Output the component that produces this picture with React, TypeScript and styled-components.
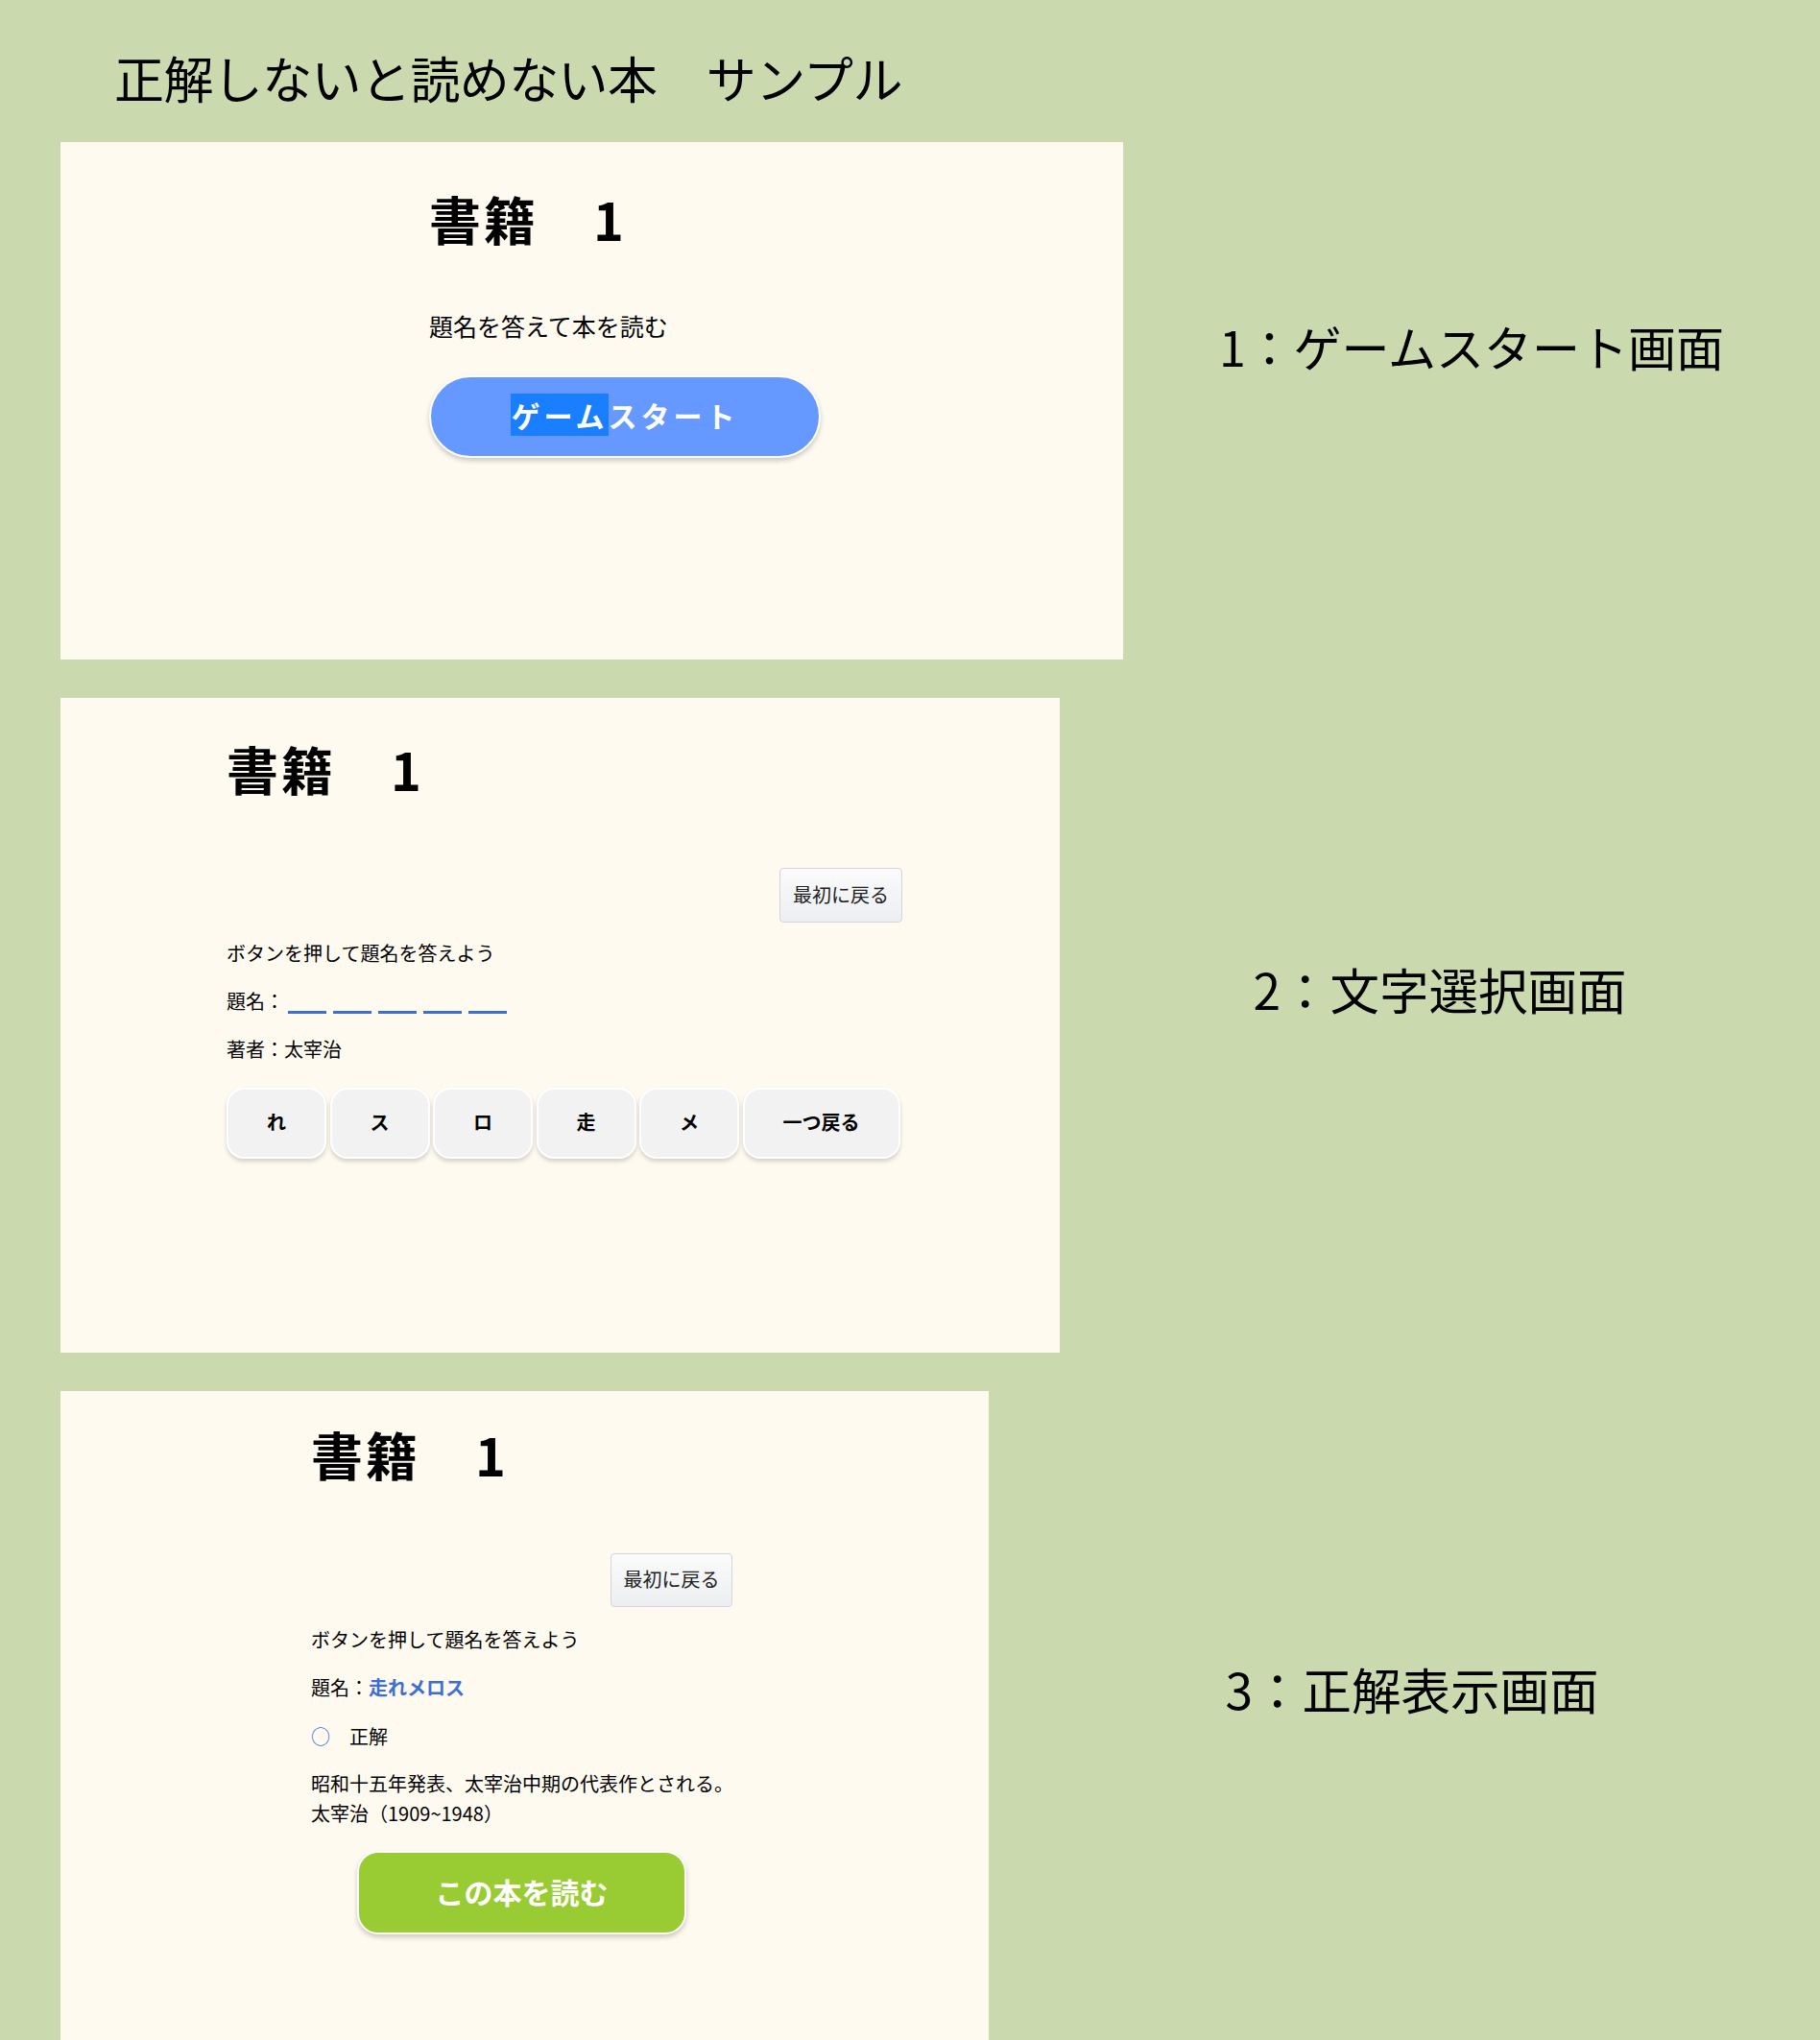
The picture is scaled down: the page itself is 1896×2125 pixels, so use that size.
import React from 'react'
import styled, { createGlobalStyle } from 'styled-components'

const GlobalStyle = createGlobalStyle`
  html, body {
    margin: 0;
    padding: 0;
    background: #cbd9af;
  }
  body {
    font-family: "Noto Sans CJK JP", "Noto Sans", sans-serif;
    color: #000;
  }
`

const Page = styled.div`
  display: flex;
  flex-direction: column;
  gap: 40px;
  padding-left: 63px;
`

const PageTitle = styled.h1`
  margin: 0;
  height: 108px;
  box-sizing: border-box;
  padding: 55px 0 0 56px;
  font-size: 52px;
  line-height: 52px;
  font-weight: 400;
  letter-spacing: -0.6px;
  white-space: nowrap;
`

const Row = styled.div`
  display: flex;
  align-items: flex-start;
`

const Panel = styled.section`
  flex-shrink: 0;
  box-sizing: border-box;
  width: ${({ $w }) => $w}px;
  height: ${({ $h }) => $h}px;
  padding: ${({ $top }) => $top}px 0 0 ${({ $left }) => $left}px;
  background: #fffaf0;
  overflow: hidden;
`

const Column = styled.div`
  display: flex;
  flex-direction: column;
  align-items: flex-start;
  width: ${({ $w }) => $w}px;
`

const ScreenLabel = styled.div`
  flex: 1;
  text-align: center;
  margin-top: ${({ $top }) => $top}px;
  padding-left: ${({ $shift }) => $shift || 0}px;
  font-size: ${({ $size }) => $size || 50}px;
  line-height: 50px;
  font-weight: 400;
  white-space: nowrap;
`

const BookTitle = styled.h2`
  margin: 0;
  font-size: 54px;
  line-height: 54px;
  font-weight: 700;
  letter-spacing: 3px;
  white-space: nowrap;
`

const Lead = styled.p`
  margin: 72px 0 0;
  font-size: 25px;
  line-height: 25px;
`

const StartButton = styled.button`
  margin-top: 39px;
  width: 408px;
  height: 86px;
  padding: 0 0 4px;
  border: 2px solid #fff;
  border-radius: 43px;
  background: #6699ff;
  color: #fff;
  font-family: inherit;
  font-size: 30px;
  font-weight: 700;
  letter-spacing: 4px;
  box-shadow: 0 3px 5px rgba(0, 0, 0, 0.2);
  cursor: pointer;
`

const Selected = styled.span`
  background: #1a7fff;
  line-height: normal;
`

const BackRow = styled.div`
  align-self: stretch;
  display: flex;
  justify-content: flex-end;
  margin-top: 76px;
`

const BackButton = styled.button`
  width: ${({ $w }) => $w}px;
  height: ${({ $h }) => $h}px;
  padding: 0 0 3px;
  border: 1px solid #d3d5d9;
  border-radius: 4px;
  background: linear-gradient(#fbfbfb, #eceef1);
  color: #222;
  font-family: inherit;
  font-size: 20px;
  cursor: pointer;
`

const Line = styled.p`
  margin: ${({ $gap }) => $gap}px 0 0;
  font-size: 20px;
  line-height: ${({ $lh }) => $lh || 20}px;
  white-space: nowrap;
`

const Blank = styled.span`
  display: inline-block;
  box-sizing: border-box;
  width: 40px;
  height: 23px;
  margin-right: 7px;
  vertical-align: top;
  border-bottom: 3px solid #3c6ed6;
`

const Answer = styled.span`
  color: #3c6ed6;
  font-weight: 700;
`

const Mark = styled.span`
  color: #3c6ed6;
`

const Keys = styled.div`
  display: flex;
  gap: 3.5px;
  margin-top: 30px;
`

const Key = styled.button`
  width: ${({ $wide }) => ($wide ? 164 : 104)}px;
  height: 74px;
  padding: 0 0 3px;
  border: 2px solid #fff;
  border-radius: 18px;
  background: #f2f2f2;
  color: #000;
  font-family: inherit;
  font-size: 20px;
  font-weight: 700;
  box-shadow: 0 3px 4px rgba(0, 0, 0, 0.16);
  cursor: pointer;
`

const ReadButton = styled.button`
  align-self: center;
  margin-top: 24px;
  width: 343px;
  height: 87px;
  padding: 0 0 4px;
  border: 2px solid #fff;
  border-radius: 22px;
  background: #99cc33;
  color: #fff;
  font-family: inherit;
  font-size: 30px;
  font-weight: 700;
  box-shadow: 0 3px 5px rgba(0, 0, 0, 0.2);
  cursor: pointer;
`

const keys = ['れ', 'ス', 'ロ', '走', 'メ']

export default function App() {
  return (
    <>
      <GlobalStyle />
      <Page>
        <PageTitle>正解しないと読めない本　サンプル</PageTitle>

        <Row>
          <Panel $w={1107} $h={539} $top={53} $left={384}>
            <Column $w={420}>
              <BookTitle>書籍　1</BookTitle>
              <Lead>題名を答えて本を読む</Lead>
              <StartButton>
                <Selected>ゲーム</Selected>スタート
              </StartButton>
            </Column>
          </Panel>
          <ScreenLabel $top={187}>1：ゲームスタート画面</ScreenLabel>
        </Row>

        <Row>
          <Panel $w={1041} $h={682} $top={47} $left={173}>
            <Column $w={704}>
              <BookTitle>書籍　1</BookTitle>
              <BackRow>
                <BackButton $w={128} $h={57}>最初に戻る</BackButton>
              </BackRow>
              <Line $gap={22}>ボタンを押して題名を答えよう</Line>
              <Line $gap={30}>
                題名：{' '}
                {keys.map((k) => (
                  <Blank key={k} />
                ))}
              </Line>
              <Line $gap={27}>著者：太宰治</Line>
              <Keys>
                {keys.map((k) => (
                  <Key key={k}>{k}</Key>
                ))}
                <Key $wide>一つ戻る</Key>
              </Keys>
            </Column>
          </Panel>
          <ScreenLabel $top={278} $size={51.5}>2：文字選択画面</ScreenLabel>
        </Row>

        <Row>
          <Panel $w={967} $h={676} $top={39} $left={261}>
            <Column $w={439}>
              <BookTitle>書籍　1</BookTitle>
              <BackRow>
                <BackButton $w={127} $h={56}>最初に戻る</BackButton>
              </BackRow>
              <Line $gap={24}>ボタンを押して題名を答えよう</Line>
              <Line $gap={30}>
                題名：<Answer>走れメロス</Answer>
              </Line>
              <Line $gap={31}>
                <Mark>○</Mark>　正解
              </Line>
              <Line $gap={24} $lh={30.5}>
                昭和十五年発表、太宰治中期の代表作とされる。
                <br />
                太宰治（1909~1948）
              </Line>
              <ReadButton>この本を読む</ReadButton>
            </Column>
          </Panel>
          <ScreenLabel $top={285} $size={51.5} $shift={16}>
            3：正解表示画面
          </ScreenLabel>
        </Row>
      </Page>
    </>
  )
}
